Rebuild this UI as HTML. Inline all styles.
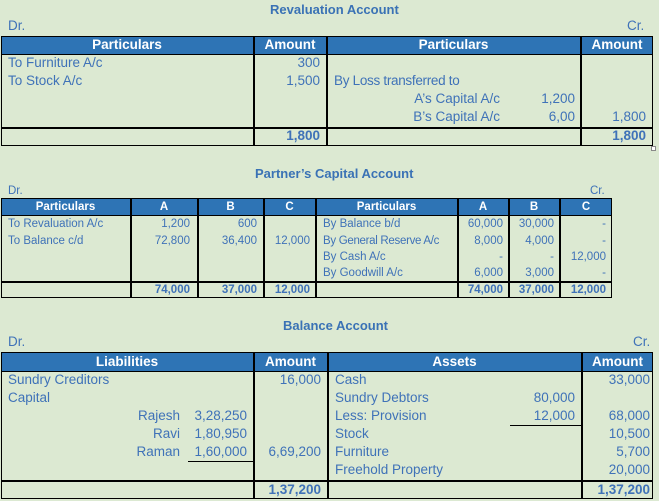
<!DOCTYPE html>
<html><head><meta charset="utf-8"><style>
*{margin:0;padding:0;box-sizing:border-box}
body{width:659px;height:501px;background:#dce9d2;position:relative;overflow:hidden;font-family:"Liberation Sans",Arial,sans-serif;color:#3f72b8}
.t{position:absolute;white-space:nowrap;font-size:13.5px;line-height:18px}
.s{font-size:11.5px;line-height:16px}
.r{text-align:right}
.c{text-align:center}
.b{font-weight:bold}
.h{position:absolute;background:#2e74b5;color:#fff;font-weight:bold;text-align:center;border:1.5px solid #000}
.box{position:absolute;border:1.5px solid #000}
.vl{position:absolute;width:1.5px;background:#000}
.hl{position:absolute;height:1.5px;background:#000}
.title{position:absolute;font-weight:bold;font-size:13px;color:#3a72b5;white-space:nowrap}
</style></head><body>

<!-- Revaluation -->
<div class="title" style="left:270px;top:2px">Revaluation Account</div>
<div class="t" style="left:8px;top:17px">Dr.</div>
<div class="t" style="left:627px;top:17px">Cr.</div>
<div class="h" style="left:1px;top:36px;width:652px;height:19px"></div>
<div class="box" style="left:1px;top:36px;width:652px;height:110px"></div>
<div class="hl" style="left:1px;top:127px;width:652px"></div>
<div class="vl" style="left:253px;top:36px;height:110px"></div>
<div class="vl" style="left:326px;top:36px;height:110px"></div>
<div class="vl" style="left:580px;top:36px;height:110px"></div>
<div class="t c b" style="left:1px;top:36px;width:252px;color:#fff">Particulars</div>
<div class="t c b" style="left:254px;top:36px;width:72px;color:#fff">Amount</div>
<div class="t c b" style="left:327px;top:36px;width:253px;color:#fff">Particulars</div>
<div class="t c b" style="left:581px;top:36px;width:72px;color:#fff">Amount</div>
<div class="t" style="left:8px;top:54px">To Furniture A/c</div>
<div class="t" style="left:8px;top:72px">To Stock A/c</div>
<div class="t r" style="left:254px;top:54px;width:66px">300</div>
<div class="t r" style="left:254px;top:72px;width:66px">1,500</div>
<div class="t" style="left:334px;top:72px;letter-spacing:-0.3px">By Loss transferred to</div>
<div class="t r" style="left:380px;top:90px;width:120px">A’s Capital A/c</div>
<div class="t r" style="left:380px;top:108px;width:120px">B’s Capital A/c</div>
<div class="t r" style="left:510px;top:90px;width:65px">1,200</div>
<div class="t r" style="left:510px;top:108px;width:65px">6,00</div>
<div class="t r" style="left:581px;top:108px;width:65px">1,800</div>
<div class="t r b" style="left:254px;top:127px;width:66px">1,800</div>
<div class="t r b" style="left:581px;top:127px;width:65px">1,800</div>
<div style="position:absolute;left:651px;top:146px;width:5px;height:5px;border:1px solid #888;background:#fff"></div>

<!-- Partner's Capital -->
<div class="title" style="left:255px;top:166px">Partner’s Capital Account</div>
<div class="t s" style="left:8px;top:183px">Dr.</div>
<div class="t s" style="left:590px;top:183px">Cr.</div>
<div class="h" style="left:1px;top:198px;width:611px;height:18px"></div>
<div class="box" style="left:1px;top:198px;width:611px;height:100px"></div>
<div class="hl" style="left:1px;top:281px;width:611px"></div>
<div class="vl" style="left:130px;top:198px;height:100px"></div>
<div class="vl" style="left:197px;top:198px;height:100px"></div>
<div class="vl" style="left:263px;top:198px;height:100px"></div>
<div class="vl" style="left:315px;top:198px;height:100px"></div>
<div class="vl" style="left:457px;top:198px;height:100px"></div>
<div class="vl" style="left:508px;top:198px;height:100px"></div>
<div class="vl" style="left:559px;top:198px;height:100px"></div>
<div class="t s c b" style="left:1px;top:199px;width:129px;color:#fff">Particulars</div>
<div class="t s c b" style="left:131px;top:199px;width:66px;color:#fff">A</div>
<div class="t s c b" style="left:198px;top:199px;width:65px;color:#fff">B</div>
<div class="t s c b" style="left:264px;top:199px;width:51px;color:#fff">C</div>
<div class="t s c b" style="left:316px;top:199px;width:141px;color:#fff">Particulars</div>
<div class="t s c b" style="left:458px;top:199px;width:50px;color:#fff">A</div>
<div class="t s c b" style="left:509px;top:199px;width:50px;color:#fff">B</div>
<div class="t s c b" style="left:560px;top:199px;width:52px;color:#fff">C</div>

<div class="t s" style="left:8px;top:216px">To Revaluation A/c</div>
<div class="t s" style="left:8px;top:233px">To Balance c/d</div>
<div class="t s r" style="left:131px;top:216px;width:59px">1,200</div>
<div class="t s r" style="left:131px;top:233px;width:59px">72,800</div>
<div class="t s r" style="left:198px;top:216px;width:59px">600</div>
<div class="t s r" style="left:198px;top:233px;width:59px">36,400</div>
<div class="t s r" style="left:264px;top:233px;width:46px">12,000</div>
<div class="t s" style="left:323px;top:216px">By Balance b/d</div>
<div class="t s" style="left:323px;top:233px;letter-spacing:-0.3px">By General Reserve A/c</div>
<div class="t s" style="left:323px;top:249px">By Cash A/c</div>
<div class="t s" style="left:323px;top:265px">By Goodwill A/c</div>
<div class="t s r" style="left:458px;top:216px;width:45px">60,000</div>
<div class="t s r" style="left:458px;top:233px;width:45px">8,000</div>
<div class="t s r" style="left:458px;top:249px;width:45px">-</div>
<div class="t s r" style="left:458px;top:265px;width:45px">6,000</div>
<div class="t s r" style="left:509px;top:216px;width:45px">30,000</div>
<div class="t s r" style="left:509px;top:233px;width:45px">4,000</div>
<div class="t s r" style="left:509px;top:249px;width:45px">-</div>
<div class="t s r" style="left:509px;top:265px;width:45px">3,000</div>
<div class="t s r" style="left:560px;top:216px;width:46px">-</div>
<div class="t s r" style="left:560px;top:233px;width:46px">-</div>
<div class="t s r" style="left:560px;top:249px;width:46px">12,000</div>
<div class="t s r" style="left:560px;top:265px;width:46px">-</div>
<div class="t s r b" style="left:131px;top:282px;width:59px">74,000</div>
<div class="t s r b" style="left:198px;top:282px;width:59px">37,000</div>
<div class="t s r b" style="left:264px;top:282px;width:46px">12,000</div>
<div class="t s r b" style="left:458px;top:282px;width:45px">74,000</div>
<div class="t s r b" style="left:509px;top:282px;width:45px">37,000</div>
<div class="t s r b" style="left:560px;top:282px;width:46px">12,000</div>

<!-- Balance -->
<div class="title" style="left:283px;top:318px">Balance Account</div>
<div class="t" style="left:8px;top:333px">Dr.</div>
<div class="t" style="left:633px;top:333px">Cr.</div>
<div class="h" style="left:1px;top:352px;width:652px;height:20px"></div>
<div class="box" style="left:1px;top:352px;width:652px;height:147px"></div>
<div class="hl" style="left:1px;top:480px;width:652px"></div>
<div class="vl" style="left:253px;top:352px;height:147px"></div>
<div class="vl" style="left:327px;top:352px;height:147px"></div>
<div class="vl" style="left:581px;top:352px;height:147px"></div>
<div class="hl" style="left:188px;top:461px;width:65px;height:1px"></div>
<div class="hl" style="left:510px;top:425px;width:71px;height:1px"></div>
<div class="t c b" style="left:1px;top:353px;width:252px;color:#fff">Liabilities</div>
<div class="t c b" style="left:254px;top:353px;width:73px;color:#fff">Amount</div>
<div class="t c b" style="left:328px;top:353px;width:253px;color:#fff">Assets</div>
<div class="t c b" style="left:582px;top:353px;width:71px;color:#fff">Amount</div>
<div class="t" style="left:8px;top:371px">Sundry Creditors</div>
<div class="t" style="left:8px;top:389px">Capital</div>
<div class="t r" style="left:100px;top:407px;width:80px">Rajesh</div>
<div class="t r" style="left:100px;top:425px;width:80px">Ravi</div>
<div class="t r" style="left:100px;top:443px;width:80px">Raman</div>
<div class="t r" style="left:180px;top:407px;width:67px">3,28,250</div>
<div class="t r" style="left:180px;top:425px;width:67px">1,80,950</div>
<div class="t r" style="left:180px;top:443px;width:67px">1,60,000</div>
<div class="t r" style="left:254px;top:371px;width:67px">16,000</div>
<div class="t r" style="left:254px;top:443px;width:67px">6,69,200</div>
<div class="t r b" style="left:254px;top:481px;width:67px">1,37,200</div>
<div class="t" style="left:335px;top:371px">Cash</div>
<div class="t" style="left:335px;top:389px">Sundry Debtors</div>
<div class="t" style="left:335px;top:407px">Less: Provision</div>
<div class="t" style="left:335px;top:425px">Stock</div>
<div class="t" style="left:335px;top:443px">Furniture</div>
<div class="t" style="left:335px;top:461px">Freehold Property</div>
<div class="t r" style="left:500px;top:389px;width:75px">80,000</div>
<div class="t r" style="left:500px;top:407px;width:75px">12,000</div>
<div class="t r" style="left:582px;top:371px;width:68px">33,000</div>
<div class="t r" style="left:582px;top:407px;width:68px">68,000</div>
<div class="t r" style="left:582px;top:425px;width:68px">10,500</div>
<div class="t r" style="left:582px;top:443px;width:68px">5,700</div>
<div class="t r" style="left:582px;top:461px;width:68px">20,000</div>
<div class="t r b" style="left:582px;top:481px;width:68px">1,37,200</div>
</body></html>
